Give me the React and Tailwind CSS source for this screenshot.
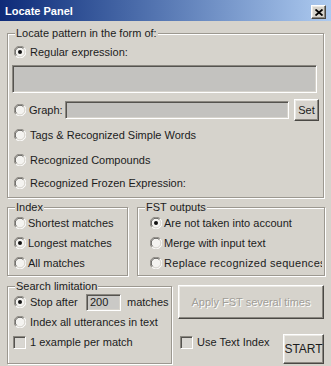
import React from "react";

const Radio = ({ checked }) => (
  <svg width="12" height="12" viewBox="0 0 12 12" className="shrink-0">
    <circle cx="6" cy="6" r="5.5" fill="#f4f3f0" />
    <path d="M10.2 1.8 A5.9 5.9 0 0 0 1.8 10.2" stroke="#8a8780" strokeWidth="1" fill="none" />
    <path d="M1.8 10.2 A5.9 5.9 0 0 0 10.2 1.8" stroke="#ffffff" strokeWidth="1" fill="none" />
    <path d="M9.4 2.6 A4.7 4.7 0 0 0 2.6 9.4" stroke="#55534f" strokeWidth="1" fill="none" />
    <path d="M2.6 9.4 A4.7 4.7 0 0 0 9.4 2.6" stroke="#d6d3cc" strokeWidth="1" fill="none" />
    {checked && <circle cx="6" cy="6" r="2" fill="#111" />}
  </svg>
);

const Check = () => (
  <div className="w-[13px] h-[13px] shrink-0 bg-[#d9d7d2] border border-t-[#8a8780] border-l-[#8a8780] border-b-white border-r-white shadow-[inset_1px_1px_0_#55534f,inset_-1px_-1px_0_#d6d3cc]" />
);

const Group = ({ label, className, children }) => (
  <fieldset className={"min-w-0 shrink-0 border border-[#9c9890] shadow-[inset_1px_1px_0_#ffffff,1px_1px_0_#ffffff] " + className}>
    <legend className="ml-[7px] px-[1px] leading-[13px] bg-[#d6d3cc]">{label}</legend>
    {children}
  </fieldset>
);

const RadioRow = ({ checked, children, className = "", textClass = "ml-[4px]" }) => (
  <div className={"flex items-center h-[16px] " + className}>
    <Radio checked={checked} />
    <span className={"whitespace-nowrap " + textClass}>{children}</span>
  </div>
);

const sunken =
  "border border-t-[#8a8780] border-l-[#8a8780] border-b-white border-r-white shadow-[inset_1px_1px_0_#55534f,inset_-1px_-1px_0_#d6d3cc]";
const raised =
  "border border-t-white border-l-white border-b-[#4a4844] border-r-[#4a4844] shadow-[inset_-1px_-1px_0_#8a8780,inset_1px_1px_0_#ebe9e4] bg-[#d6d3cc]";

export default function App() {
  return (
    <div
      className="w-[331px] h-[366px] overflow-hidden bg-[#d6d3cc] text-[11px] leading-[13px] text-[#1c1c1c]"
      style={{ fontFamily: '"Liberation Sans", Arial, sans-serif' }}
    >
      {/* Title bar */}
      <div className="h-[21px] flex items-start justify-between bg-gradient-to-r from-[#0e2a78] to-[#aecbf0]">
        <span className="pl-[5px] pt-[5px] text-white font-bold text-[11px] leading-[13px]">Locate Panel</span>
        <div className={"mt-[5px] mr-[5px] w-[15px] h-[14px] flex items-center justify-center " + raised}>
          <svg width="8" height="7" viewBox="0 0 8 7">
            <path d="M0.5 0.5 L7.5 6.5 M7.5 0.5 L0.5 6.5" stroke="#000" strokeWidth="1.8" />
          </svg>
        </div>
      </div>

      <div className="px-[7px]">
        {/* Locate pattern group */}
        <Group label="Locate pattern in the form of:" className="mt-[6px] w-[317px] pb-[6px]">
          <div className="flex flex-col">
            <RadioRow checked className="mt-[4px] pl-[6px]">Regular expression:</RadioRow>
            <div className={"mt-[5px] ml-[4px] w-[305px] h-[28px] bg-[#c3c2bf] " + sunken} />
            <div className="mt-[6px] flex items-center h-[22px] pl-[6px] pr-[4px]">
              <Radio />
              <span className="ml-[3px]">Graph:</span>
              <div className={"ml-[2px] flex-1 h-[18px] bg-[#c3c2bf] " + sunken} />
              <div className={"ml-[5px] w-[25px] h-[22px] flex items-center justify-center " + raised}>Set</div>
            </div>
            <RadioRow className="mt-[6px] pl-[6px]">Tags &amp; Recognized Simple Words</RadioRow>
            <RadioRow className="mt-[9px] pl-[6px]">Recognized Compounds</RadioRow>
            <RadioRow className="mt-[7px] pl-[6px]">Recognized Frozen Expression:</RadioRow>
          </div>
        </Group>

        {/* Index / FST outputs */}
        <div className="mt-[3px] flex gap-[9px]">
          <Group label="Index" className="w-[121px] pb-[4px]">
            <div className="flex flex-col gap-[4px] mt-[1px]">
              <RadioRow className="pl-[6px]" textClass="ml-[2px]">Shortest matches</RadioRow>
              <RadioRow checked className="pl-[6px]" textClass="ml-[2px]">Longest matches</RadioRow>
              <RadioRow className="pl-[6px]" textClass="ml-[2px]">All matches</RadioRow>
            </div>
          </Group>
          <Group label="FST outputs" className="w-[188px] pb-[4px]">
            <div className="flex flex-col gap-[4px] mt-[1px] overflow-hidden mr-[2px]">
              <RadioRow checked className="pl-[12px]" textClass="ml-[2px]">Are not taken into account</RadioRow>
              <RadioRow className="pl-[12px]" textClass="ml-[2px]">Merge with input text</RadioRow>
              <RadioRow className="pl-[12px]" textClass="ml-[2px] tracking-[0.3px]">Replace recognized sequences</RadioRow>
            </div>
          </Group>
        </div>

        {/* Search limitation + right column */}
        <div className="mt-[4px] flex gap-[6px]">
          <Group label="Search limitation" className="w-[165px] pb-[7px]">
            <div className="flex flex-col">
              <div className="flex items-center h-[18px] pl-[6px]">
                <Radio checked />
                <span className="ml-[4px] w-[56px]">Stop after</span>
                <div className={"w-[35px] h-[17px] pl-[3px] flex items-center bg-[#cac9c6] " + sunken}>200</div>
                <span className="ml-[6px]">matches</span>
              </div>
              <RadioRow className="mt-[3px] pl-[6px]">Index all utterances in text</RadioRow>
              <div className="mt-[4px] flex items-center h-[16px] pl-[5px]">
                <Check />
                <span className="ml-[4px]">1 example per match</span>
              </div>
            </div>
          </Group>

          <div className="w-[147px] flex flex-col">
            <div
              className={"mt-[5px] h-[34px] flex items-center justify-center text-[#a19e98] [text-shadow:1px_1px_0_#ffffff] " + raised}
            >
              Apply FST several times
            </div>
            <div className="mt-[15px] flex items-start">
              <div className="flex items-center h-[16px] ml-[2px]">
                <Check />
                <span className="ml-[4px]">Use Text Index</span>
              </div>
              <div className={"ml-auto w-[41px] h-[30px] flex items-center justify-center text-[12px] " + raised}>START</div>
            </div>
          </div>
        </div>
      </div>
    </div>
  );
}
